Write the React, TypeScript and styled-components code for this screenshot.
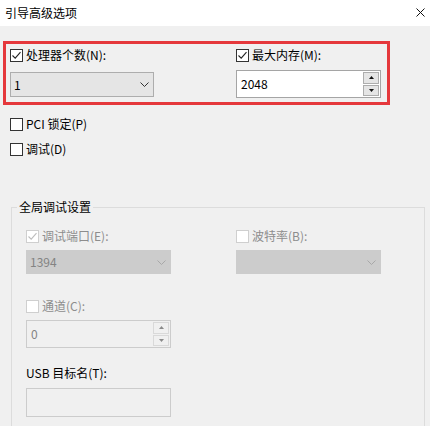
import React from "react";
import styled, { createGlobalStyle } from "styled-components";

const Global = createGlobalStyle`
  html, body { margin: 0; padding: 0; background: #f0f0f0; }
  body {
    font-family: "Noto Sans CJK SC", "Noto Sans", sans-serif;
    font-size: 12px;
    color: #000;
    overflow: hidden;
  }
`;

const Dialog = styled.div`
  width: 430px;
  height: 426px;
  background: #f0f0f0;
  overflow: hidden;
  display: flex;
  flex-direction: column;
`;

const TitleBar = styled.div`
  height: 26px;
  flex-shrink: 0;
  background: #ffffff;
  display: flex;
  align-items: center;
  justify-content: space-between;
  padding: 0 5px 0 5px;
  box-sizing: border-box;
`;

const Title = styled.span`
  font-size: 12px;
  line-height: 16px;
  margin-top: -1px;
`;

const CloseButton = styled.span`
  width: 9px;
  height: 9px;
  display: flex;
  margin-top: -2px;
`;

const Body = styled.div`
  display: flex;
  flex-direction: column;
  align-items: flex-start;
`;

const Highlight = styled.div`
  margin: 15px 0 0 3px;
  width: 387px;
  height: 64px;
  box-sizing: border-box;
  border: 3px solid #e5383c;
  padding: 3px 0 0 4px;
  display: grid;
  grid-template-columns: 226px 145px;
  align-items: start;
`;

const Field = styled.div<{ $gap: number }>`
  display: flex;
  flex-direction: column;
  align-items: flex-start;
  gap: ${(p) => p.$gap}px;
`;

const Options = styled.div`
  margin: 11px 0 0 10px;
  display: flex;
  flex-direction: column;
  gap: 9px;
`;

const CheckRow = styled.label<{ $disabled?: boolean }>`
  display: flex;
  align-items: center;
  gap: 3px;
  height: 16px;
  line-height: 16px;
  white-space: nowrap;
  color: ${(p) => (p.$disabled ? "#8d8d8d" : "#000000")};
`;

const Box = styled.span<{ $disabled?: boolean }>`
  width: 13px;
  height: 13px;
  box-sizing: border-box;
  border: 1px solid ${(p) => (p.$disabled ? "#cfcfcf" : "#333333")};
  background: #ffffff;
  display: flex;
  align-items: center;
  justify-content: center;
  flex-shrink: 0;
`;

const Combo = styled.div<{ $disabled?: boolean; $width: number }>`
  width: ${(p) => p.$width}px;
  height: ${(p) => (p.$disabled ? 24 : 25)}px;
  box-sizing: border-box;
  border: 1px solid ${(p) => (p.$disabled ? "#cccccc" : "#adadad")};
  background: ${(p) => (p.$disabled ? "#cccccc" : "#e5e5e5")};
  color: ${(p) => (p.$disabled ? "#838383" : "#000000")};
  display: flex;
  align-items: center;
  justify-content: space-between;
  padding: 0 4px 0 3px;
  line-height: 16px;
`;

const Spin = styled.div<{ $disabled?: boolean }>`
  width: 145px;
  height: 28px;
  box-sizing: border-box;
  border: 1px solid ${(p) => (p.$disabled ? "#cccccc" : "#a5a5a5")};
  background: ${(p) => (p.$disabled ? "#f0f0f0" : "#ffffff")};
  color: ${(p) => (p.$disabled ? "#838383" : "#000000")};
  display: flex;
  padding: 1px;
`;

const SpinValue = styled.span`
  flex: 1;
  display: flex;
  align-items: center;
  padding-left: 3px;
  line-height: 16px;
`;

const SpinButtons = styled.div`
  width: 16px;
  display: flex;
  flex-direction: column;
  gap: 1px;
`;

const SpinButton = styled.span<{ $disabled?: boolean }>`
  flex: 1;
  box-sizing: border-box;
  border: 1px solid ${(p) => (p.$disabled ? "#d9d9d9" : "#adadad")};
  background: ${(p) => (p.$disabled ? "#f0f0f0" : "#e5e5e5")};
  display: flex;
  align-items: center;
  justify-content: center;
`;

const Group = styled.fieldset`
  margin: 42px 0 0 11px;
  width: 414px;
  box-sizing: border-box;
  border: 1px solid #dcdcdc;
  padding: 13px 0 60px 14px;
  min-width: 0;
`;

const Legend = styled.legend`
  padding: 0 2px;
  margin-left: -9px;
  line-height: 16px;
  font-size: 12px;
`;

const GroupGrid = styled.div`
  display: grid;
  grid-template-columns: 210px 145px;
  align-items: start;
`;

const Stack = styled.div`
  display: flex;
  flex-direction: column;
  align-items: flex-start;
`;

const Spaced = styled.div<{ $top: number }>`
  margin-top: ${(p) => p.$top}px;
`;

const Label = styled.div`
  height: 16px;
  line-height: 16px;
  white-space: nowrap;
`;

const TextBox = styled.div`
  width: 145px;
  height: 29px;
  box-sizing: border-box;
  border: 1px solid #cccccc;
  background: #f0f0f0;
`;

const CheckMark = ({ color }: { color: string }) => (
  <svg width="11" height="11" viewBox="0 0 11 11">
    <path d="M1.5 5.5 L4.2 8.2 L9.5 2.2" fill="none" stroke={color} strokeWidth="1.1" />
  </svg>
);

const Check = ({
  label,
  checked,
  disabled,
}: {
  label: string;
  checked?: boolean;
  disabled?: boolean;
}) => (
  <CheckRow $disabled={disabled}>
    <Box $disabled={disabled}>{checked && <CheckMark color={disabled ? "#bdbdbd" : "#222"} />}</Box>
    <span>{label}</span>
  </CheckRow>
);

const Chevron = ({ color }: { color: string }) => (
  <svg width="9" height="5" viewBox="0 0 9 5">
    <path d="M0.5 0.5 L4.5 4.5 L8.5 0.5" fill="none" stroke={color} strokeWidth="1" />
  </svg>
);

const Triangle = ({ up, color }: { up?: boolean; color: string }) => (
  <svg width="5" height="3" viewBox="0 0 5 3">
    <path d={up ? "M0 3 L2.5 0 L5 3 Z" : "M0 0 L2.5 3 L5 0 Z"} fill={color} />
  </svg>
);

const SpinBox = ({ value, disabled }: { value: string; disabled?: boolean }) => (
  <Spin $disabled={disabled}>
    <SpinValue>{value}</SpinValue>
    <SpinButtons>
      <SpinButton $disabled={disabled}>
        <Triangle up color={disabled ? "#8a8a8a" : "#111"} />
      </SpinButton>
      <SpinButton $disabled={disabled}>
        <Triangle color={disabled ? "#8a8a8a" : "#111"} />
      </SpinButton>
    </SpinButtons>
  </Spin>
);

export default function App() {
  return (
    <>
      <Global />
      <Dialog>
        <TitleBar>
          <Title>引导高级选项</Title>
          <CloseButton>
            <svg width="9" height="9" viewBox="0 0 9 9">
              <path d="M0.5 0.5 L8.5 8.5 M8.5 0.5 L0.5 8.5" stroke="#111" strokeWidth="1" />
            </svg>
          </CloseButton>
        </TitleBar>
        <Body>
          <Highlight>
            <Field $gap={9}>
              <Check label="处理器个数(N):" checked />
              <Combo $width={144}>
                <span>1</span>
                <Chevron color="#333" />
              </Combo>
            </Field>
            <Field $gap={7}>
              <Check label="最大内存(M):" checked />
              <SpinBox value="2048" />
            </Field>
          </Highlight>
          <Options>
            <Check label="PCI 锁定(P)" />
            <Check label="调试(D)" />
          </Options>
          <Group>
            <Legend>全局调试设置</Legend>
            <GroupGrid>
              <Stack>
                <Check label="调试端口(E):" checked disabled />
                <Spaced $top={6}>
                  <Combo $width={145} $disabled>
                    <span>1394</span>
                    <Chevron color="#a8a8a8" />
                  </Combo>
                </Spaced>
                <Spaced $top={24}>
                  <Check label="通道(C):" disabled />
                </Spaced>
                <Spaced $top={6}>
                  <SpinBox value="0" disabled />
                </Spaced>
                <Spaced $top={17}>
                  <Label>USB 目标名(T):</Label>
                </Spaced>
                <Spaced $top={7}>
                  <TextBox />
                </Spaced>
              </Stack>
              <Stack>
                <Check label="波特率(B):" disabled />
                <Spaced $top={6}>
                  <Combo $width={145} $disabled>
                    <span />
                    <Chevron color="#a8a8a8" />
                  </Combo>
                </Spaced>
              </Stack>
            </GroupGrid>
          </Group>
        </Body>
      </Dialog>
    </>
  );
}
